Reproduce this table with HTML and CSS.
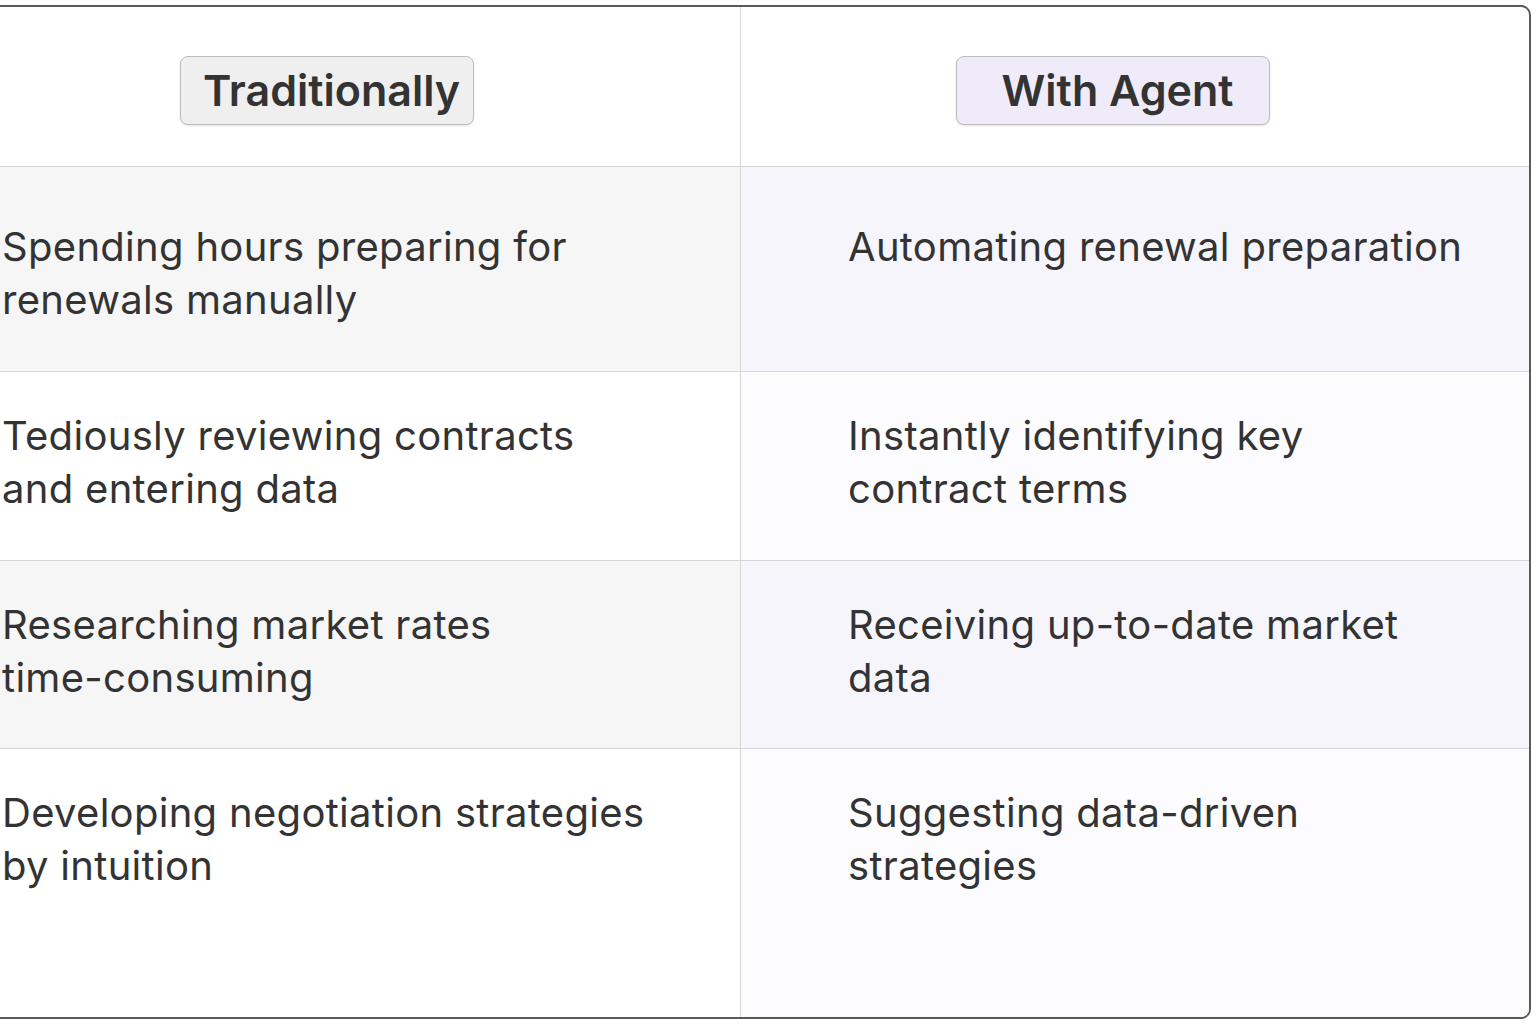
FILE: index.html
```html
<!DOCTYPE html>
<html lang="en">
<head>
<meta charset="utf-8">
<title>Traditionally vs With Agent</title>
<link rel="stylesheet" href="styles.css">
</head>
<body>
<div class="card">
  <div class="cell head left"><span class="pill pill-gray">Traditionally</span></div>
  <div class="cell head right"><span class="pill pill-violet">With Agent</span></div>

  <div class="cell left shade r1">Spending hours preparing for<br>renewals manually</div>
  <div class="cell right shade r1">Automating renewal preparation</div>

  <div class="cell left r2">Tediously reviewing contracts<br>and entering data</div>
  <div class="cell right plain r2">Instantly identifying key<br>contract terms</div>

  <div class="cell left shade r3">Researching market rates<br>time-consuming</div>
  <div class="cell right shade r3">Receiving up-to-date market<br>data</div>

  <div class="cell left last r4">Developing negotiation strategies<br>by intuition</div>
  <div class="cell right plain last r4">Suggesting data-driven<br>strategies</div>
</div>
</body>
</html>
```

FILE: styles.css
```css
html, body {
  margin: 0;
  padding: 0;
  background: #ffffff;
}

body {
  font-family: Inter, "Noto Sans", "Liberation Sans", sans-serif;
  color: #333333;
  overflow: hidden;
}

.card {
  margin-top: 5px;
  margin-left: -20px;
  width: 1551px;
  height: 1014px;
  box-sizing: border-box;
  border: 2px solid #5a5a5a;
  border-radius: 10px;
  background: #ffffff;
  display: grid;
  grid-template-columns: 759px 1fr;
  grid-template-rows: 160px 205px 189px 188px 1fr;
  overflow: hidden;
}

.cell {
  box-sizing: border-box;
  border-bottom: 1px solid #d6d6d6;
  font-size: 40px;
  line-height: 53px;
  font-weight: 400;
  letter-spacing: 0.3px;
  white-space: nowrap;
}

.cell.last {
  border-bottom: none;
}

.left {
  border-right: 1px solid #d6d6d6;
  padding-left: 20px;
  padding-right: 40px;
}

.right {
  padding-left: 107px;
  padding-right: 20px;
}

.r1 { padding-top: 53px; }
.r2, .r3, .r4 { padding-top: 37px; }

.left.shade { background: #f6f6f6; }
.right.shade { background: #f7f5fc; }
.right.plain { background: #fcfbfe; }

.head {
  display: flex;
  align-items: flex-start;
  padding-top: 49px;
}

.head.left { padding-left: 198px; }
.head.right { padding-left: 215px; }

.pill {
  display: inline-flex;
  align-items: center;
  justify-content: center;
  box-sizing: border-box;
  height: 69px;
  padding-left: 9px;
  padding-bottom: 1px;
  border: 1px solid #bdbdbd;
  border-radius: 8px;
  font-size: 43px;
  font-weight: 600;
  letter-spacing: 0;
  color: #333333;
  box-shadow: 0 1px 2px rgba(0, 0, 0, 0.12);
}

.pill-gray {
  width: 294px;
  background: #efefef;
}

.pill-violet {
  width: 314px;
  background: #efebf9;
}
```
